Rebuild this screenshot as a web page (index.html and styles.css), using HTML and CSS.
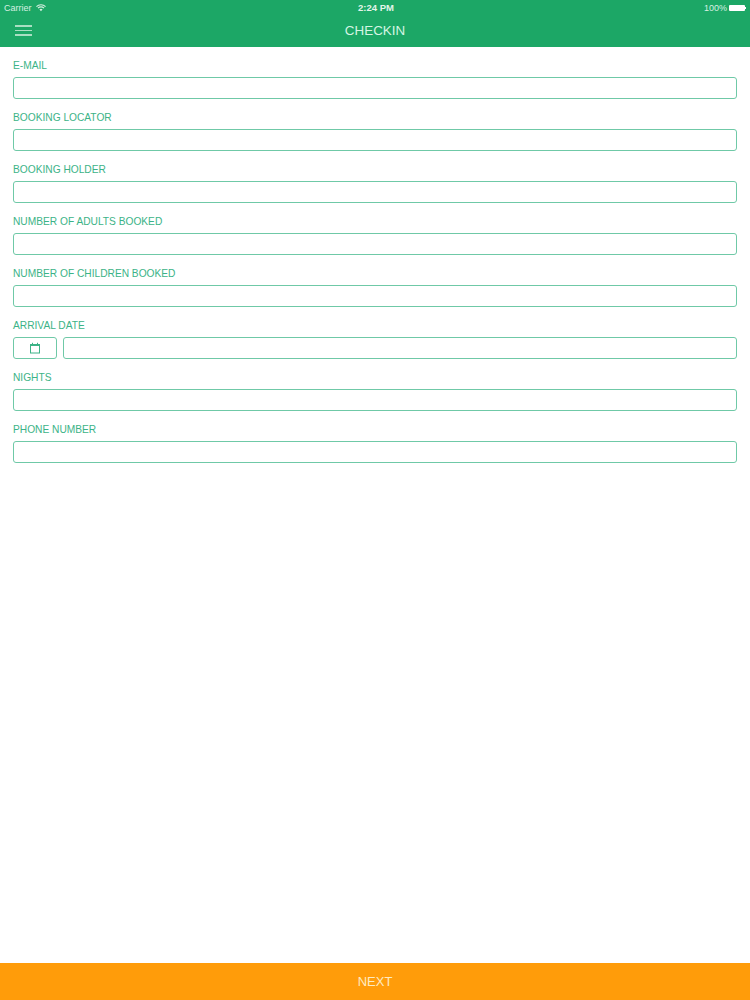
FILE: index.html
```html
<!DOCTYPE html>
<html lang="en">
<head>
    <meta charset="UTF-8">
    <title>Checkin</title>
    <link rel="stylesheet" href="styles.css">
</head>
<body>
    <div class="header">
        <div class="statusbar">
            <div class="status-left">
                Carrier
                <svg class="wifi" width="10" height="8" viewBox="0 0 11 8">
                    <path d="M0.5 2.6 A7 7 0 0 1 10.5 2.6" fill="none" stroke="#d8f0e2" stroke-width="1.2"/>
                    <path d="M2.2 4.2 A4.6 4.6 0 0 1 8.8 4.2" fill="none" stroke="#d8f0e2" stroke-width="1.2"/>
                    <path d="M3.8 5.6 A2.4 2.4 0 0 1 7.2 5.6 L5.5 7.6 Z" fill="#d8f0e2"/>
                </svg>
            </div>
            <div class="status-time">2:24 PM</div>
            <div class="status-right">
                100%
                <span class="battery"></span>
            </div>
        </div>
        <div class="titlebar">
            <div class="menu-icon">
                <span></span>
                <span></span>
                <span></span>
            </div>
            <div class="title">CHECKIN</div>
        </div>
    </div>

    <form class="form">
        <div class="form-group">
            <label for="email">E-MAIL</label>
            <input type="text" id="email">
        </div>
        <div class="form-group">
            <label for="locator">BOOKING LOCATOR</label>
            <input type="text" id="locator">
        </div>
        <div class="form-group">
            <label for="holder">BOOKING HOLDER</label>
            <input type="text" id="holder">
        </div>
        <div class="form-group">
            <label for="adults">NUMBER OF ADULTS BOOKED</label>
            <input type="text" id="adults">
        </div>
        <div class="form-group">
            <label for="children">NUMBER OF CHILDREN BOOKED</label>
            <input type="text" id="children">
        </div>
        <div class="form-group">
            <label for="arrival">ARRIVAL DATE</label>
            <div class="date-row">
                <button type="button" class="date-button">
                    <svg width="12" height="12" viewBox="0 0 12 12">
                        <rect x="1.5" y="2.5" width="9" height="8.5" fill="none" stroke="#3cb387" stroke-width="1"/>
                        <rect x="1.5" y="2" width="9" height="2" fill="#3cb387"/>
                        <path d="M3.5 0.8 V2.8 M8.5 0.8 V2.8" stroke="#3cb387" stroke-width="1"/>
                    </svg>
                </button>
                <input type="text" id="arrival">
            </div>
        </div>
        <div class="form-group">
            <label for="nights">NIGHTS</label>
            <input type="text" id="nights">
        </div>
        <div class="form-group">
            <label for="phone">PHONE NUMBER</label>
            <input type="text" id="phone">
        </div>
    </form>

    <div class="next-button">NEXT</div>
</body>
</html>
```

FILE: styles.css
```css
/* General Styles */
body {
    margin: 0;
    padding: 0;
    font-family: "Liberation Sans", Arial, sans-serif;
    display: flex;
    flex-direction: column;
    height: 100vh;
    background-color: #ffffff;
}

/* Header */
.header {
    height: 47px;
    box-sizing: border-box;
    background-color: #1ca766;
    color: #d8f0e2;
}

.statusbar {
    display: grid;
    grid-template-columns: 1fr auto 1fr;
    align-items: center;
    height: 15px;
    padding: 0 5px 0 4px;
    font-size: 9px;
}

.status-left {
    display: flex;
    align-items: center;
    gap: 4px;
}

.status-time {
    margin-left: 3px;
    font-size: 9.5px;
    font-weight: bold;
    color: #e3f5ea;
}

.status-right {
    display: flex;
    align-items: center;
    justify-content: flex-end;
    gap: 2px;
}

.battery {
    position: relative;
    width: 16px;
    height: 6px;
    border-radius: 1px;
    background-color: #ffffff;
}

.battery::after {
    content: "";
    position: absolute;
    left: 16px;
    top: 2px;
    width: 1px;
    height: 2px;
    background-color: #ffffff;
}

.titlebar {
    display: flex;
    align-items: center;
    justify-content: center;
    position: relative;
    height: 31px;
}

.title {
    font-size: 13.4px;
    color: #d5f5e3;
}

.menu-icon {
    position: absolute;
    left: 15px;
    top: 10px;
    display: flex;
    flex-direction: column;
    gap: 3px;
    width: 17px;
}

.menu-icon span {
    height: 1.5px;
    background-color: #a9dfc2;
}

/* Form */
.form {
    flex: 1;
    padding: 0 13px;
}

.form-group label {
    display: block;
    height: 18px;
    padding-top: 12px;
    line-height: 13px;
    font-size: 10.2px;
    color: #3cb387;
}

.form-group input {
    display: block;
    width: 100%;
    height: 22px;
    padding: 0 6px;
    border: 1px solid #6fc9a7;
    border-radius: 3px;
    box-sizing: border-box;
    background-color: #ffffff;
    outline: none;
}

.date-row {
    display: flex;
    gap: 6px;
}

.date-row input {
    flex: 1;
}

.date-button {
    display: flex;
    align-items: center;
    justify-content: center;
    width: 44px;
    height: 22px;
    padding: 0;
    border: 1px solid #6fc9a7;
    border-radius: 3px;
    background-color: #ffffff;
}

/* Footer button */
.next-button {
    height: 37px;
    line-height: 37px;
    text-align: center;
    font-size: 13px;
    color: #feeac0;
    background-color: #ff9c0a;
}
```
